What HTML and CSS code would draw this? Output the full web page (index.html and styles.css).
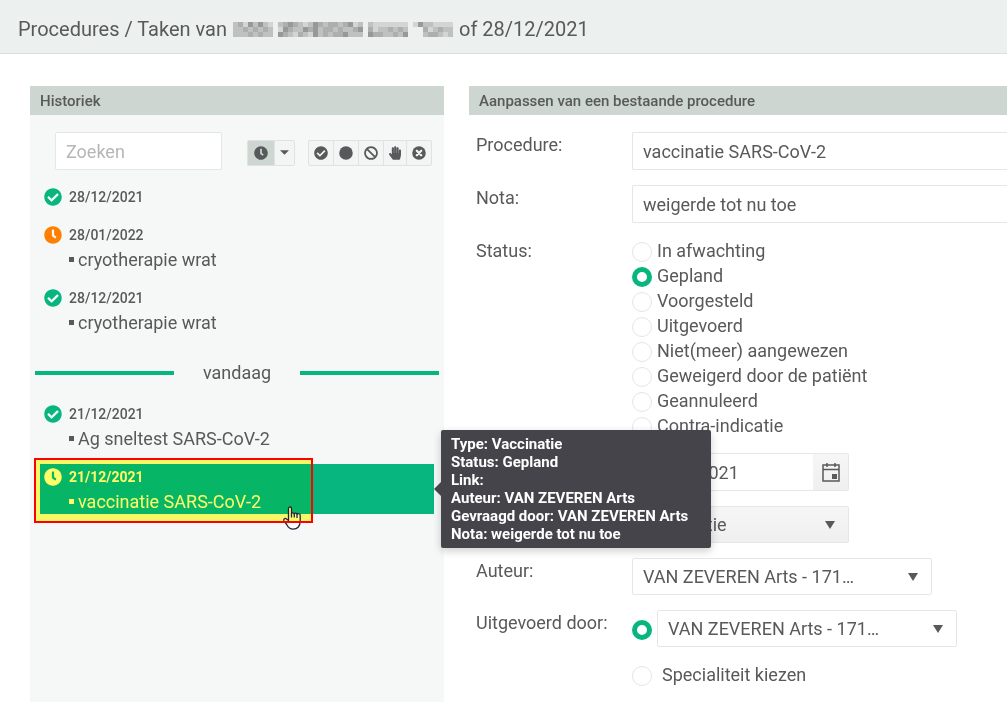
FILE: index.html
```html
<!DOCTYPE html>
<html lang="nl">
<head>
    <meta charset="UTF-8">
    <meta name="viewport" content="width=device-width, initial-scale=1.0">
    <title>Procedures / Taken</title>
    <link rel="stylesheet" href="styles.css">
</head>
<body>
    <!-- Shared icons -->
    <svg class="sprite" aria-hidden="true">
        <symbol id="icon-check" viewBox="0 0 512 512">
            <path d="M504 256c0 136.967-111.033 248-248 248S8 392.967 8 256 119.033 8 256 8s248 111.033 248 248zM227.314 387.314l184-184c6.248-6.248 6.248-16.379 0-22.627l-22.627-22.627c-6.248-6.249-16.379-6.249-22.628 0L216 308.118l-70.059-70.059c-6.248-6.248-16.379-6.248-22.628 0l-22.627 22.627c-6.248 6.248-6.248 16.379 0 22.627l104 104c6.249 6.249 16.379 6.249 22.628.001z"/>
        </symbol>
        <symbol id="icon-clock" viewBox="0 0 512 512">
            <path d="M256,8C119,8,8,119,8,256S119,504,256,504,504,393,504,256,393,8,256,8Zm92.49,313h0l-20,25a16,16,0,0,1-22.49,2.5h0l-67-49.72a40,40,0,0,1-15-31.23V112a16,16,0,0,1,16-16h32a16,16,0,0,1,16,16V256l58,42.5A16,16,0,0,1,348.49,321Z"/>
        </symbol>
        <symbol id="icon-circle" viewBox="0 0 512 512">
            <circle cx="256" cy="256" r="248"/>
        </symbol>
        <symbol id="icon-ban" viewBox="0 0 512 512">
            <path d="M256 40a216 216 0 1 0 .1 0zM104 104l304 304" fill="none" stroke="currentColor" stroke-width="64"/>
        </symbol>
        <symbol id="icon-hand" viewBox="0 0 448 512">
            <path d="M408.781 128.007C386.356 127.578 368 146.36 368 168.79V256h-8V79.79c0-22.43-18.356-41.212-40.781-40.783C297.488 39.423 280 57.169 280 79v177h-8V40.79C272 18.36 253.644-.422 231.219.007 209.488.423 192 18.169 192 40v216h-8V80.79c0-22.43-18.356-41.212-40.781-40.783C121.488 40.423 104 58.169 104 80v235.992l-31.648-43.519c-12.993-17.866-38.009-21.817-55.877-8.823-17.865 12.994-21.815 38.01-8.822 55.877l125.601 172.705A48 48 0 0 0 172.073 512h197.59c22.274 0 41.622-15.324 46.724-37.006l26.508-112.66a192.011 192.011 0 0 0 5.104-43.975V168c.001-21.831-17.487-39.577-39.218-39.993z"/>
        </symbol>
        <symbol id="icon-times" viewBox="0 0 512 512">
            <circle cx="256" cy="256" r="248"/>
            <path d="M176 176l160 160M336 176l-160 160" stroke="#f3f5f4" stroke-width="84" stroke-linecap="round"/>
        </symbol>
        <symbol id="icon-caret" viewBox="0 0 10 5">
            <path d="M0 0h10L5 5z"/>
        </symbol>
    </svg>

    <header class="page-header">
        <h1 class="page-title">
            <span>Procedures / Taken van</span>
            <svg class="masked-name" viewBox="0 0 44 3" preserveAspectRatio="none" shape-rendering="crispEdges" fill="none" aria-hidden="true">
                <path stroke="#bfc1c0" d="M0 .5h8M9 .5h17M27 .5h1M37 .5h3M0 1.5h8M9 1.5h17M27 1.5h8M38 1.5h6M0 2.5h8M9 2.5h17M27 2.5h8M38 2.5h6"/>
                <path stroke="#d2d5d4" d="M2 .5h1M7 .5h1M14 .5h1M24 .5h1M28 .5h7M36 .5h1M40 .5h4M9 1.5h1M28 1.5h1M39 1.5h1M12 2.5h1M15 2.5h1M34 2.5h1M42 2.5h1"/>
                <path stroke="#acafae" d="M1 .5h1M10 .5h1M12 .5h1M17 .5h1M19 .5h2M22 .5h1M2 1.5h1M4 1.5h1M6 1.5h1M11 1.5h1M15 1.5h1M18 1.5h2M21 1.5h1M24 1.5h1M27 1.5h1M31 1.5h1M33 1.5h1M38 1.5h1M41 1.5h1M3 2.5h1M5 2.5h1M10 2.5h1M13 2.5h1M18 2.5h1M20 2.5h2M28 2.5h2M32 2.5h1M39 2.5h2"/>
                <path stroke="#979998" d="M3 .5h1M5 .5h1M11 .5h1M16 .5h1M23 .5h1M37 .5h1M10 1.5h1M14 1.5h1M16 1.5h1M25 1.5h1M9 2.5h1M16 2.5h1M22 2.5h1M27 2.5h1M34 2.5h1"/>
            </svg>
            <span>of 28/12/2021</span>
        </h1>
    </header>

    <main class="layout">
        <section class="panel history">
            <h2 class="panel-title">Historiek</h2>
            <div class="filters">
                <input class="field search" type="text" placeholder="Zoeken" aria-label="Zoeken">
                <div class="btn-group">
                    <button class="btn btn-active" type="button" aria-label="Gepland"><svg class="icon"><use href="#icon-clock"/></svg></button>
                    <button class="btn btn-caret" type="button" aria-label="Meer"><svg class="caret"><use href="#icon-caret"/></svg></button>
                </div>
                <div class="btn-group">
                    <button class="btn" type="button" aria-label="Uitgevoerd"><svg class="icon"><use href="#icon-check"/></svg></button>
                    <button class="btn" type="button" aria-label="Voorgesteld"><svg class="icon"><use href="#icon-circle"/></svg></button>
                    <button class="btn" type="button" aria-label="Niet aangewezen"><svg class="icon"><use href="#icon-ban"/></svg></button>
                    <button class="btn" type="button" aria-label="Geweigerd"><svg class="icon icon-narrow"><use href="#icon-hand"/></svg></button>
                    <button class="btn" type="button" aria-label="Geannuleerd"><svg class="icon"><use href="#icon-times"/></svg></button>
                </div>
            </div>

            <div class="entries">
                <div class="entry">
                    <div class="entry-date"><svg class="state done"><use href="#icon-check"/></svg>28/12/2021</div>
                </div>
                <div class="entry">
                    <div class="entry-date"><svg class="state planned"><use href="#icon-clock"/></svg>28/01/2022</div>
                    <div class="entry-item">cryotherapie wrat</div>
                </div>
                <div class="entry">
                    <div class="entry-date"><svg class="state done"><use href="#icon-check"/></svg>28/12/2021</div>
                    <div class="entry-item">cryotherapie wrat</div>
                </div>
            </div>

            <div class="today">vandaag</div>

            <div class="entries">
                <div class="entry">
                    <div class="entry-date"><svg class="state done"><use href="#icon-check"/></svg>21/12/2021</div>
                    <div class="entry-item">Ag sneltest SARS-CoV-2</div>
                </div>
                <div class="entry selected">
                    <div class="entry-date"><svg class="state"><use href="#icon-clock"/></svg>21/12/2021</div>
                    <div class="entry-item">vaccinatie SARS-CoV-2</div>
                    <svg class="cursor" viewBox="0 0 18 24" aria-hidden="true">
                        <path d="M5.5 14.500V2.500c0-2 3-2 3 0V8c0-1.600 2.800-1.600 2.800.2 0-1.500 2.700-1.400 2.700.4 0-1.400 3.200-1.400 3.200.6V15c0 5-2.700 8.200-7 8.200-3.600 0-5.200-2-6.500-4.700L1 14.800c-.9-1.900 1.200-3 2.500-1.800z" fill="#fff" stroke="#222236" stroke-width="1.300" stroke-linejoin="round"/>
                        <path d="M8.500 7v4.500M11.300 8v3.500M14 8.500v3.500" fill="none" stroke="#222236" stroke-width="1.300"/>
                    </svg>
                    <div class="marker"></div>
                    <div class="tooltip" role="tooltip">
                        <div>Type: Vaccinatie</div>
                        <div>Status: Gepland</div>
                        <div>Link:</div>
                        <div>Auteur: VAN ZEVEREN Arts</div>
                        <div>Gevraagd door: VAN ZEVEREN Arts</div>
                        <div>Nota: weigerde tot nu toe</div>
                    </div>
                </div>
            </div>
        </section>

        <section class="panel">
            <h2 class="panel-title">Aanpassen van een bestaande procedure</h2>
            <form class="form">
                <div class="row">
                    <label for="procedure">Procedure:</label>
                    <input class="field wide" id="procedure" type="text" value="vaccinatie SARS-CoV-2">
                </div>
                <div class="row">
                    <label for="nota">Nota:</label>
                    <input class="field wide" id="nota" type="text" value="weigerde tot nu toe">
                </div>
                <div class="row" role="radiogroup" aria-labelledby="statusLabel">
                    <span id="statusLabel">Status:</span>
                    <div>
                        <label class="option"><input class="radio" type="radio" name="status">In afwachting</label>
                        <label class="option"><input class="radio" type="radio" name="status" checked>Gepland</label>
                        <label class="option"><input class="radio" type="radio" name="status">Voorgesteld</label>
                        <label class="option"><input class="radio" type="radio" name="status">Uitgevoerd</label>
                        <label class="option"><input class="radio" type="radio" name="status">Niet(meer) aangewezen</label>
                        <label class="option"><input class="radio" type="radio" name="status">Geweigerd door de patiënt</label>
                        <label class="option"><input class="radio" type="radio" name="status">Geannuleerd</label>
                        <label class="option"><input class="radio" type="radio" name="status">Contra-indicatie</label>
                    </div>
                </div>
                <div class="row">
                    <div class="date-picker">
                        <input class="date-input" type="text" value="21/12/2021" aria-label="Datum">
                        <button class="date-btn" type="button" aria-label="Kalender">
                            <svg class="calendar" viewBox="0 0 20 20">
                                <path d="M2 3h16v16H2zM2 7.500h16M6 1v4M14 1v4" fill="none" stroke="currentColor" stroke-width="1.500"/>
                                <path d="M11 12h5v5h-5z"/>
                            </svg>
                        </button>
                    </div>
                </div>
                <div class="row">
                    <div class="select-wrap narrow">
                        <select class="select shaded" aria-label="Type"><option>Vaccinatie</option></select>
                    </div>
                </div>
                <div class="row">
                    <label for="auteur">Auteur:</label>
                    <div class="select-wrap">
                        <select class="select" id="auteur"><option>VAN ZEVEREN Arts - 171…</option></select>
                    </div>
                </div>
                <div class="row">
                    <label for="uitvoerder">Uitgevoerd door:</label>
                    <div class="performer">
                        <input class="radio" type="radio" name="uitvoerder" aria-label="Uitvoerder kiezen" checked>
                        <div class="select-wrap">
                            <select class="select" id="uitvoerder"><option>VAN ZEVEREN Arts - 171…</option></select>
                        </div>
                    </div>
                    <label class="option specialty"><input class="radio" type="radio" name="uitvoerder">Specialiteit kiezen</label>
                </div>
            </form>
        </section>
    </main>
</body>
</html>
```

FILE: styles.css
```css
* {
    box-sizing: border-box;
}
body {
    margin: 0;
    min-height: 100vh;
    display: flex;
    flex-direction: column;
    background-color: #fff;
    color: #58595b;
    font-family: Roboto, "Liberation Sans", sans-serif;
    font-size: 18px;
    line-height: 25px;
}
input, select, button {
    font: inherit;
    color: inherit;
}
svg {
    fill: currentColor;
}
.sprite {
    position: absolute;
    width: 0;
    height: 0;
}

/* Header */
.page-header {
    padding: 17px 18px 11px;
    background-color: #ecf0ef;
    border-bottom: 1px solid #d9dfdc;
}
.page-title {
    display: flex;
    align-items: center;
    gap: 6px;
    margin: 0;
    font-size: 20px;
    font-weight: 400;
}
.masked-name {
    width: 220px;
    height: 15px;
}

/* Panels */
.layout {
    flex: 1;
    display: grid;
    grid-template-columns: minmax(0, 414fr) minmax(0, 538fr);
    gap: 25px;
    padding: 32px 0 0 30px;
}
.panel-title {
    margin: 0;
    padding: 3px 10px 1px;
    background-color: #cdd6d0;
    font-size: 15px;
    font-weight: 500;
}
.history {
    background-color: #f6f8f7;
}
.field, .select {
    height: 38px;
    padding: 0 10px;
    background-color: #fff;
    border: 1px solid #e4e7e5;
    border-radius: 2px;
    outline: none;
}

/* Filters */
.filters {
    display: flex;
    align-items: center;
    padding: 17px 12px 14px 25px;
}
.search {
    width: 167px;
    margin-right: auto;
}
.search::placeholder {
    color: #b5b7b6;
    opacity: 1;
}
.btn-group {
    display: flex;
    margin-left: 13px;
    margin-top: 3px;
}
.btn {
    display: flex;
    align-items: center;
    justify-content: center;
    height: 26px;
    margin-right: -1px;
    padding: 0 5px;
    background-color: #f3f5f4;
    border: 1px solid #dfe2e0;
    cursor: pointer;
}
.btn:first-child {
    border-radius: 2px 0 0 2px;
}
.btn:last-child {
    margin-right: 0;
    border-radius: 0 2px 2px 0;
}
.btn-active {
    width: 28px;
    background-color: #cdd6d0;
}
.btn-caret {
    width: 21px;
}
.icon {
    width: 14px;
    height: 14px;
}
.icon-narrow {
    width: 12px;
}
.caret {
    width: 9px;
    height: 5px;
}

/* History list */
.entries {
    display: flex;
    flex-direction: column;
    gap: 13px;
    padding: 0 10px;
}
.entry {
    position: relative;
    padding: 0 4px;
}
.entry-date {
    display: flex;
    align-items: center;
    gap: 7px;
    padding-top: 2px;
    font-size: 14px;
    font-weight: 500;
    line-height: 23px;
}
.entry-item {
    display: flex;
    align-items: center;
    gap: 4px;
    padding-left: 25px;
}
.entry-item::before {
    content: "";
    width: 5px;
    height: 5px;
    background-color: currentColor;
}
.state {
    width: 18px;
    height: 18px;
    margin-bottom: 2px;
}
.done {
    color: #07b57f;
}
.planned {
    color: #ff8000;
}
.selected {
    background-color: #07b57f;
    color: #fff;
}
.selected .entry-date {
    font-weight: 700;
}
.today {
    display: flex;
    align-items: center;
    gap: 29px;
    padding: 25px 5px 16px;
}
.today::before, .today::after {
    content: "";
    flex: 1;
    height: 4px;
    background-color: #07b57f;
}

/* Overlays on the selected entry */
.cursor {
    position: absolute;
    left: 243px;
    top: 42px;
    width: 18px;
    height: 24px;
}
.marker {
    position: absolute;
    left: -6px;
    top: -6px;
    bottom: -9px;
    width: 279px;
    border: 2px solid #f00;
    pointer-events: none;
}
.marker::before {
    content: "";
    position: absolute;
    inset: 0;
    background-color: #ffff66;
    mix-blend-mode: darken;
}
.tooltip {
    position: absolute;
    z-index: 2;
    left: calc(100% + 7px);
    top: -34px;
    width: 270px;
    padding: 5px 10px;
    background-color: #46444b;
    border-radius: 2px;
    box-shadow: 0 3px 8px rgba(0, 0, 0, 0.2);
    color: #fff;
    font-size: 15px;
    font-weight: 700;
    line-height: 18px;
    white-space: nowrap;
}
.tooltip::before {
    content: "";
    position: absolute;
    left: -7px;
    top: 52px;
    border: 7px solid transparent;
    border-left-width: 0;
    border-right-color: #46444b;
}

/* Form */
.form {
    display: flex;
    flex-direction: column;
    gap: 15px;
    padding: 17px 0 14px 7px;
}
.row {
    display: grid;
    grid-template-columns: 156px minmax(0, 1fr);
    row-gap: 15px;
    align-items: start;
}
.wide {
    width: 100%;
    border-right: none;
    border-radius: 2px 0 0 2px;
}
.option {
    display: flex;
    align-items: center;
    gap: 5px;
}
.specialty {
    grid-column: 2;
    gap: 10px;
}
.radio {
    appearance: none;
    flex: none;
    width: 20px;
    height: 20px;
    margin: 3px 0 0;
    background-color: #fff;
    border: 1px solid #e4e5e5;
    border-radius: 50%;
}
.radio:checked {
    border: 5px solid #07b57f;
}
.date-picker {
    display: flex;
    grid-column: 2;
    width: 217px;
    height: 38px;
    background-color: #fff;
    border: 1px solid #e6e7e7;
    border-radius: 2px;
}
.date-input {
    flex: 1;
    min-width: 0;
    padding: 0 10px;
    border: none;
    background: none;
}
.date-btn {
    display: flex;
    align-items: center;
    justify-content: center;
    width: 35px;
    padding: 0;
    border: none;
    background: linear-gradient(#f6f6f6, #efefef);
    cursor: pointer;
}
.calendar {
    width: 20px;
    height: 20px;
}
.select-wrap {
    position: relative;
    grid-column: 2;
    width: 300px;
}
.narrow {
    width: 217px;
}
.select-wrap::after {
    content: "";
    position: absolute;
    right: 14px;
    top: 15px;
    border: 5px solid transparent;
    border-top: 8px solid #58595b;
    border-bottom: none;
    pointer-events: none;
}
.select {
    display: block;
    appearance: none;
    width: 100%;
    height: 37px;
}
.shaded {
    background: linear-gradient(#f6f6f6, #efefef);
}
.performer {
    display: flex;
    align-items: center;
    gap: 5px;
}
```
